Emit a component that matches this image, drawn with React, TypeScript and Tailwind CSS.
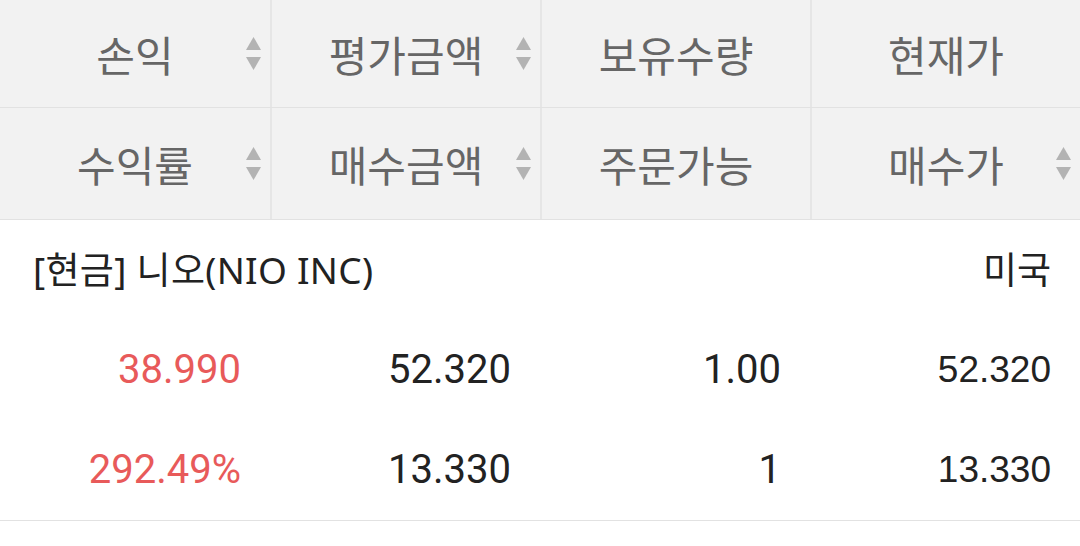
import React from "react";

type HeadCell = { label: string; sort?: boolean };

const headRows: HeadCell[][] = [
  [{ label: "손익", sort: true }, { label: "평가금액", sort: true }, { label: "보유수량" }, { label: "현재가" }],
  [{ label: "수익률", sort: true }, { label: "매수금액", sort: true }, { label: "주문가능" }, { label: "매수가", sort: true }],
];

const dataRows: { value: string; red?: boolean }[][] = [
  [{ value: "38.990", red: true }, { value: "52.320" }, { value: "1.00" }, { value: "52.320" }],
  [{ value: "292.49%", red: true }, { value: "13.330" }, { value: "1" }, { value: "13.330" }],
];

function SortIcon() {
  return (
    <svg width="15" height="34" viewBox="0 0 15 34" className="absolute right-[9px] top-1/2 -translate-y-1/2">
      <polygon points="7.5,0 15,13 0,13" fill="#b3b3b3" />
      <polygon points="0,20 15,20 7.5,33" fill="#b3b3b3" />
    </svg>
  );
}

export default function App() {
  return (
    <div className="w-[1080px] h-[546px] bg-white font-['Roboto','Noto_Sans_CJK_KR',sans-serif]">
      {/* Header */}
      <div className="bg-[#f2f2f2]">
        {headRows.map((row, ri) => (
          <div key={ri} className="grid grid-cols-4 border-b border-[#e2e2e2]">
            {row.map((cell, ci) => (
              <div
                key={ci}
                className={`relative flex items-center justify-center text-[42px] text-[#666666] ${
                  ci > 0 ? "border-l-2 border-[#e6e6e6]" : ""
                } ${ri === 1 ? "h-[111px]" : "h-[107px]"}`}
              >
                <span className="font-['Noto_Sans_CJK_KR',sans-serif] leading-none">{cell.label}</span>
                {cell.sort && <SortIcon />}
              </div>
            ))}
          </div>
        ))}
      </div>

      {/* Body */}
      <div className="border-b border-[#e2e2e2]">
        <div className="flex h-[100px] items-center justify-between pl-[33px] pr-[29px] font-['Noto_Sans','Noto_Sans_CJK_KR',sans-serif] text-[37px] text-[#222222]">
          <span className="tracking-[0.3px]">[현금] 니오(NIO INC)</span>
          <span>미국</span>
        </div>
        {dataRows.map((row, ri) => (
          <div key={ri} className="grid h-[100px] grid-cols-4 items-center">
            {row.map((c, ci) => (
              <div
                key={ci}
                className={`pr-[29px] text-right ${
                  ci === 3 ? "font-['Liberation_Sans',sans-serif] text-[37px]" : "text-[40px]"
                } ${c.red ? "text-[#e85a5a]" : "text-[#222222]"}`}
              >
                {c.value}
              </div>
            ))}
          </div>
        ))}
      </div>
    </div>
  );
}
